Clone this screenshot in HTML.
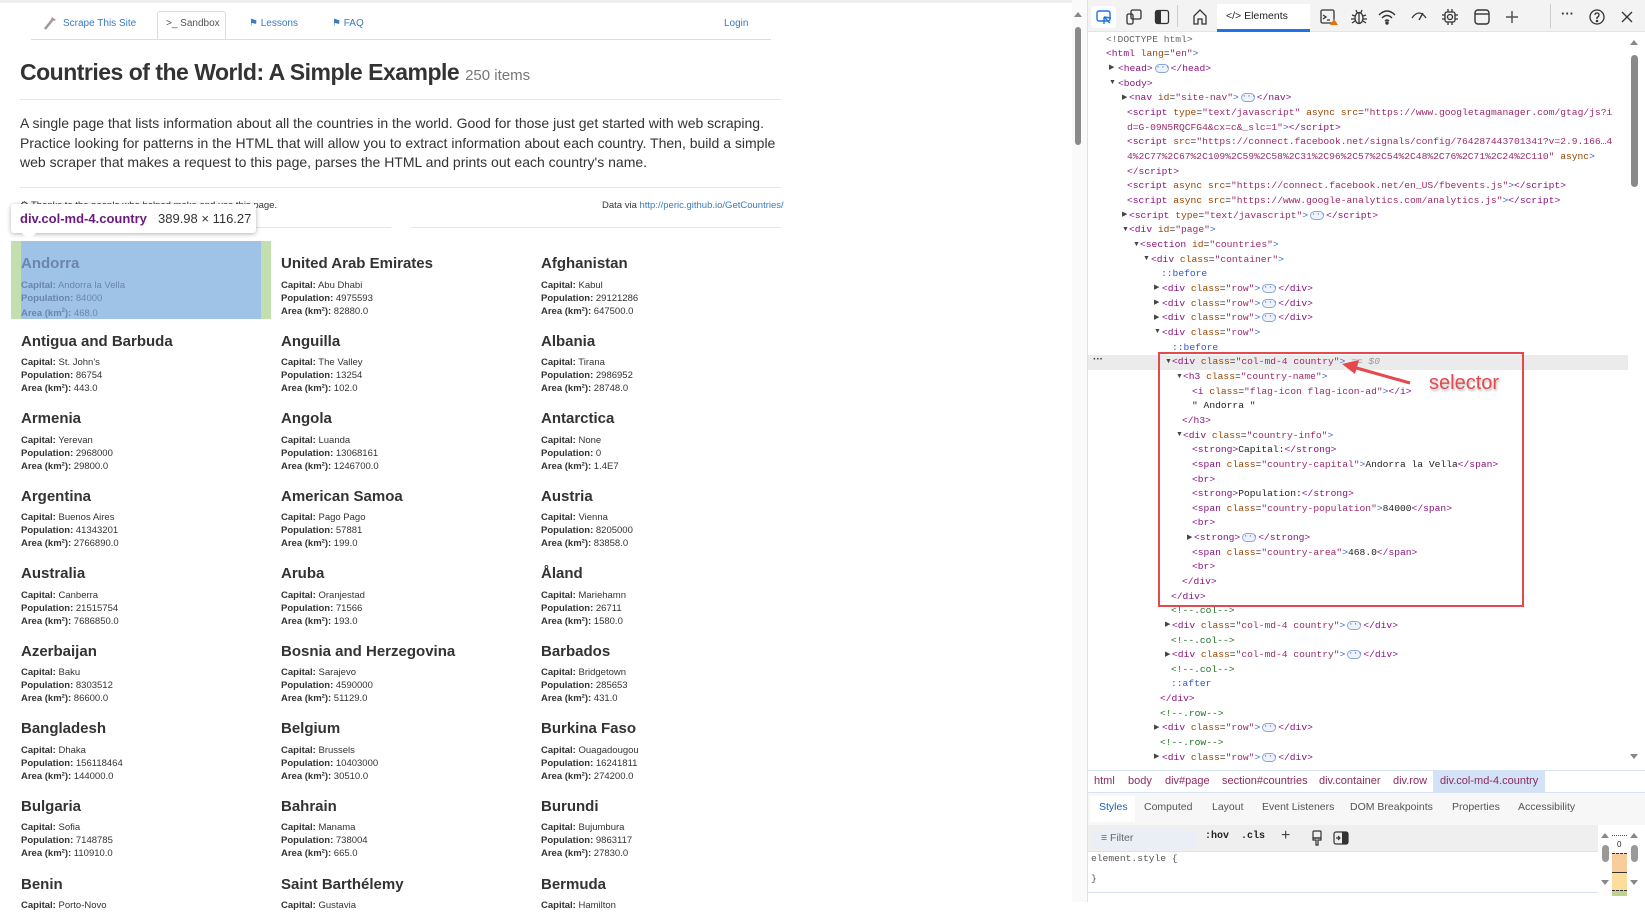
<!DOCTYPE html>
<html><head><meta charset="utf-8">
<style>
*{margin:0;padding:0;box-sizing:border-box}
body{width:1645px;height:902px;overflow:hidden;background:#fff;font-family:"Liberation Sans",Arial,sans-serif;position:relative}
.a{position:absolute;white-space:pre}
.nav{font-size:10px;color:#3a7bbf;top:18px}
.ct{font-size:15px;font-weight:bold;color:#333}
.ci{font-size:9.5px;color:#333;line-height:13px}
.ci b{font-weight:bold}
.dt{position:absolute;white-space:pre;font-family:"Liberation Mono",monospace;font-size:9.65px;line-height:14px;color:#222}
.t{color:#881280}.at{color:#994500}.v{color:#9b2a6a}.p{color:#3a5fcd}.c{color:#236e25}.ps{color:#3355cc}
.tri{position:absolute;font-size:7px;color:#444;line-height:14px}
.el{display:inline-block;width:14px;height:9px;border:1px solid #8aa7d9;border-radius:5px;background:#eef3fb;color:#3a5fcd;font-size:8px;line-height:6px;text-align:center;vertical-align:middle;margin:0 2px}
.ui{position:absolute;white-space:pre;font-size:10.5px;color:#555}
.bc{position:absolute;white-space:pre;font-size:11px;color:#8a2b5f;top:775px}
.ic{position:absolute;top:8px}
</style></head><body>
<div class="a" style="left:0;top:0;width:1072px;height:3px;background:#eee"></div>

<svg class="a" style="left:42px;top:15px" width="16" height="16" viewBox="0 0 16 16"><path d="M3 14 L11 4" stroke="#999" stroke-width="2.5"/><path d="M10 2 L14 5 L12 6 L9 4Z" fill="#c88"/></svg>
<div class="a nav" style="left:63px">Scrape This Site</div>
<div class="a" style="left:157px;top:11px;width:69px;height:29px;border:1px solid #ddd;border-bottom:none;border-radius:3px 3px 0 0;background:#fff"></div>
<div class="a nav" style="left:166px;color:#555">&gt;_ Sandbox</div>
<div class="a nav" style="left:249px">&#9873; Lessons</div>
<div class="a nav" style="left:332px">&#9873; FAQ</div>
<div class="a nav" style="left:724px">Login</div>
<div class="a" style="left:31px;top:39px;width:740px;height:1px;background:#ddd"></div>

<div class="a" style="left:20px;top:59px;font-size:23px;font-weight:bold;letter-spacing:-0.5px;color:#333">Countries of the World: A Simple Example <span style="font-size:15px;font-weight:normal;letter-spacing:0;color:#777">250 items</span></div>
<div class="a" style="left:20px;top:99px;width:761px;height:1px;background:#e6e6e6"></div>
<div class="a" style="left:20px;top:114px;font-size:14px;line-height:19.5px;color:#333">A single page that lists information about all the countries in the world. Good for those just get started with web scraping.
Practice looking for patterns in the HTML that will allow you to extract information about each country. Then, build a simple
web scraper that makes a request to this page, parses the HTML and prints out each country's name.</div>
<div class="a" style="left:20px;top:187px;width:761px;height:1px;background:#e6e6e6"></div>
<div class="a" style="left:20px;top:200px;font-size:9.5px;color:#333">&#9881; Thanks to the people who helped make and use this page.</div>
<div class="a" style="left:602px;top:200px;font-size:9.5px;color:#333">Data via <span style="color:#3a7bbf">http://peric.github.io/GetCountries/</span></div>
<div class="a" style="left:20px;top:227px;width:371px;height:1px;background:#e6e6e6"></div>
<div class="a" style="left:411px;top:227px;width:370px;height:1px;background:#e6e6e6"></div>

<div class="a" style="left:11px;top:241px;width:260px;height:78px;background:#c3dfb0"></div>
<div class="a" style="left:21px;top:241px;width:240px;height:78px;background:#9fc3e7"></div>

<div class="a" style="left:11px;top:204px;width:245px;height:29px;background:#fff;border-radius:3px;box-shadow:0 1px 5px rgba(0,0,0,.3)"></div>
<div class="a" style="left:24px;top:228px;width:10px;height:10px;background:#fff;transform:rotate(45deg)"></div>
<div class="a" style="left:20px;top:211px;font-size:13px;font-weight:bold;color:#6a1b7f">div.col-md-4.country</div>
<div class="a" style="left:158px;top:211px;font-size:13px;color:#333">389.98 × 116.27</div>

<div class="a ct" style="left:21px;top:255px;color:#6a86a8">Andorra</div>
<div class="a ci" style="left:21px;top:279px;color:#6a86a8"><b>Capital:</b> Andorra la Vella
<b>Population:</b> 84000
<b>Area (km<sup style="font-size:6px">2</sup>):</b> 468.0</div>

<div class="a ct" style="left:281px;top:255px">United Arab Emirates</div>
<div class="a ci" style="left:281px;top:279px"><b>Capital:</b> Abu Dhabi
<b>Population:</b> 4975593
<b>Area (km²):</b> 82880.0</div>
<div class="a ct" style="left:541px;top:255px">Afghanistan</div>
<div class="a ci" style="left:541px;top:279px"><b>Capital:</b> Kabul
<b>Population:</b> 29121286
<b>Area (km²):</b> 647500.0</div>

<div class="a ct" style="left:21px;top:333px">Antigua and Barbuda</div>
<div class="a ci" style="left:21px;top:356px"><b>Capital:</b> St. John's
<b>Population:</b> 86754
<b>Area (km²):</b> 443.0</div>
<div class="a ct" style="left:281px;top:333px">Anguilla</div>
<div class="a ci" style="left:281px;top:356px"><b>Capital:</b> The Valley
<b>Population:</b> 13254
<b>Area (km²):</b> 102.0</div>
<div class="a ct" style="left:541px;top:333px">Albania</div>
<div class="a ci" style="left:541px;top:356px"><b>Capital:</b> Tirana
<b>Population:</b> 2986952
<b>Area (km²):</b> 28748.0</div>

<div class="a ct" style="left:21px;top:410px">Armenia</div>
<div class="a ci" style="left:21px;top:434px"><b>Capital:</b> Yerevan
<b>Population:</b> 2968000
<b>Area (km²):</b> 29800.0</div>
<div class="a ct" style="left:281px;top:410px">Angola</div>
<div class="a ci" style="left:281px;top:434px"><b>Capital:</b> Luanda
<b>Population:</b> 13068161
<b>Area (km²):</b> 1246700.0</div>
<div class="a ct" style="left:541px;top:410px">Antarctica</div>
<div class="a ci" style="left:541px;top:434px"><b>Capital:</b> None
<b>Population:</b> 0
<b>Area (km²):</b> 1.4E7</div>

<div class="a ct" style="left:21px;top:488px">Argentina</div>
<div class="a ci" style="left:21px;top:511px"><b>Capital:</b> Buenos Aires
<b>Population:</b> 41343201
<b>Area (km²):</b> 2766890.0</div>
<div class="a ct" style="left:281px;top:488px">American Samoa</div>
<div class="a ci" style="left:281px;top:511px"><b>Capital:</b> Pago Pago
<b>Population:</b> 57881
<b>Area (km²):</b> 199.0</div>
<div class="a ct" style="left:541px;top:488px">Austria</div>
<div class="a ci" style="left:541px;top:511px"><b>Capital:</b> Vienna
<b>Population:</b> 8205000
<b>Area (km²):</b> 83858.0</div>

<div class="a ct" style="left:21px;top:565px">Australia</div>
<div class="a ci" style="left:21px;top:589px"><b>Capital:</b> Canberra
<b>Population:</b> 21515754
<b>Area (km²):</b> 7686850.0</div>
<div class="a ct" style="left:281px;top:565px">Aruba</div>
<div class="a ci" style="left:281px;top:589px"><b>Capital:</b> Oranjestad
<b>Population:</b> 71566
<b>Area (km²):</b> 193.0</div>
<div class="a ct" style="left:541px;top:565px">Åland</div>
<div class="a ci" style="left:541px;top:589px"><b>Capital:</b> Mariehamn
<b>Population:</b> 26711
<b>Area (km²):</b> 1580.0</div>

<div class="a ct" style="left:21px;top:643px">Azerbaijan</div>
<div class="a ci" style="left:21px;top:666px"><b>Capital:</b> Baku
<b>Population:</b> 8303512
<b>Area (km²):</b> 86600.0</div>
<div class="a ct" style="left:281px;top:643px">Bosnia and Herzegovina</div>
<div class="a ci" style="left:281px;top:666px"><b>Capital:</b> Sarajevo
<b>Population:</b> 4590000
<b>Area (km²):</b> 51129.0</div>
<div class="a ct" style="left:541px;top:643px">Barbados</div>
<div class="a ci" style="left:541px;top:666px"><b>Capital:</b> Bridgetown
<b>Population:</b> 285653
<b>Area (km²):</b> 431.0</div>

<div class="a ct" style="left:21px;top:720px">Bangladesh</div>
<div class="a ci" style="left:21px;top:744px"><b>Capital:</b> Dhaka
<b>Population:</b> 156118464
<b>Area (km²):</b> 144000.0</div>
<div class="a ct" style="left:281px;top:720px">Belgium</div>
<div class="a ci" style="left:281px;top:744px"><b>Capital:</b> Brussels
<b>Population:</b> 10403000
<b>Area (km²):</b> 30510.0</div>
<div class="a ct" style="left:541px;top:720px">Burkina Faso</div>
<div class="a ci" style="left:541px;top:744px"><b>Capital:</b> Ouagadougou
<b>Population:</b> 16241811
<b>Area (km²):</b> 274200.0</div>

<div class="a ct" style="left:21px;top:798px">Bulgaria</div>
<div class="a ci" style="left:21px;top:821px"><b>Capital:</b> Sofia
<b>Population:</b> 7148785
<b>Area (km²):</b> 110910.0</div>
<div class="a ct" style="left:281px;top:798px">Bahrain</div>
<div class="a ci" style="left:281px;top:821px"><b>Capital:</b> Manama
<b>Population:</b> 738004
<b>Area (km²):</b> 665.0</div>
<div class="a ct" style="left:541px;top:798px">Burundi</div>
<div class="a ci" style="left:541px;top:821px"><b>Capital:</b> Bujumbura
<b>Population:</b> 9863117
<b>Area (km²):</b> 27830.0</div>

<div class="a ct" style="left:21px;top:876px">Benin</div>
<div class="a ci" style="left:21px;top:899px"><b>Capital:</b> Porto-Novo</div>
<div class="a ct" style="left:281px;top:876px">Saint Barthélemy</div>
<div class="a ci" style="left:281px;top:899px"><b>Capital:</b> Gustavia</div>
<div class="a ct" style="left:541px;top:876px">Bermuda</div>
<div class="a ci" style="left:541px;top:899px"><b>Capital:</b> Hamilton</div>

<div class="a" style="left:1072px;top:0;width:15px;height:902px;background:#fafafa"></div>
<div class="a" style="left:1074px;top:12px;width:0;height:0;border-left:4px solid transparent;border-right:4px solid transparent;border-bottom:5px solid #888"></div>
<div class="a" style="left:1075px;top:27px;width:6px;height:118px;background:#8a8a8a;border-radius:3px"></div>

<div class="a" style="left:1087px;top:0;width:558px;height:902px;background:#fff;border-left:1px solid #e0e0e0"></div>
<div class="a" style="left:1088px;top:0;width:557px;height:32px;background:#f3f3f3;border-bottom:1px solid #e4e4e4"></div>
<div class="a" style="left:1091px;top:6px;width:25px;height:22px;background:#fff;border-radius:3px"></div>
<svg class="ic" style="left:1095px" width="18" height="18" viewBox="0 0 18 18" fill="none" stroke="#1a73e8" stroke-width="1.4"><rect x="2" y="3" width="13" height="10" rx="2"/><path d="M9 9 L15 15 M9 9 L9 16 M9 9 L16 10"/></svg>
<svg class="ic" style="left:1125px" width="18" height="18" viewBox="0 0 18 18" fill="none" stroke="#333" stroke-width="1.3"><rect x="6" y="2" width="10" height="9" rx="1.5"/><rect x="2" y="6" width="6" height="10" rx="1.5"/></svg>
<svg class="ic" style="left:1153px" width="18" height="18" viewBox="0 0 18 18"><rect x="2.5" y="2.5" width="13" height="13" rx="2" fill="none" stroke="#333" stroke-width="1.3"/><rect x="3" y="3" width="5" height="12" fill="#333"/></svg>
<div class="a" style="left:1177px;top:5px;width:1px;height:22px;background:#ccc"></div>
<svg class="ic" style="left:1191px" width="18" height="18" viewBox="0 0 18 18" fill="none" stroke="#333" stroke-width="1.3"><path d="M3 16 V8 L9 2 L15 8 V16 H11 V11 H7 V16 Z"/></svg>
<div class="a" style="left:1217px;top:4px;width:93px;height:28px;background:#fff"></div>
<div class="a" style="left:1217px;top:29px;width:93px;height:3px;background:#1a73e8"></div>
<div class="a" style="left:1226px;top:10px;font-size:10.5px;color:#222">&lt;/&gt; Elements</div>
<svg class="ic" style="left:1319px" width="20" height="18" viewBox="0 0 20 18" fill="none" stroke="#333" stroke-width="1.3"><rect x="2" y="2" width="13" height="13" rx="1.5"/><path d="M4 7 L7 9 L4 11 M8 12 H11"/><path d="M15 11 L19 17 H11 Z" fill="#e8710a" stroke="none"/></svg>
<svg class="ic" style="left:1350px" width="18" height="18" viewBox="0 0 18 18" fill="none" stroke="#333" stroke-width="1.3"><ellipse cx="9" cy="10" rx="4" ry="5.5"/><path d="M9 5 V16 M2 7 L5 8 M16 7 L13 8 M1 11 H5 M17 11 H13 M2 15 L5 13 M16 15 L13 13 M6 2 L7 4.5 M12 2 L11 4.5"/></svg>
<svg class="ic" style="left:1378px" width="18" height="18" viewBox="0 0 18 18" fill="none" stroke="#333" stroke-width="1.4"><path d="M1 7 Q9 -1 17 7 M4 10 Q9 5 14 10 M7 13 Q9 11 11 13"/><circle cx="9" cy="15" r="1" fill="#333"/></svg>
<svg class="ic" style="left:1410px" width="18" height="18" viewBox="0 0 18 18" fill="none" stroke="#333" stroke-width="1.3"><path d="M2 10 Q9 0 16 10 M9 12 L13 5"/></svg>
<svg class="ic" style="left:1441px" width="18" height="18" viewBox="0 0 18 18" fill="none" stroke="#333" stroke-width="1.3"><rect x="4" y="4" width="10" height="10" rx="2"/><circle cx="9" cy="9" r="2.5"/><path d="M7 1 V4 M11 1 V4 M7 14 V17 M11 14 V17 M1 7 H4 M1 11 H4 M14 7 H17 M14 11 H17"/></svg>
<svg class="ic" style="left:1473px" width="18" height="18" viewBox="0 0 18 18" fill="none" stroke="#333" stroke-width="1.4"><rect x="2" y="2" width="14" height="14" rx="3"/><path d="M2 6 H16"/></svg>
<svg class="ic" style="left:1503px" width="18" height="18" viewBox="0 0 18 18" stroke="#555" stroke-width="1.5"><path d="M9 3 V15 M3 9 H15"/></svg>
<div class="a" style="left:1550px;top:4px;width:1px;height:24px;background:#ccc"></div>
<div class="a" style="left:1561px;top:6px;font-size:13px;color:#333;font-weight:bold">···</div>
<svg class="ic" style="left:1588px" width="18" height="18" viewBox="0 0 18 18" fill="none" stroke="#333" stroke-width="1.3"><circle cx="9" cy="9" r="7"/><path d="M7 7 Q7 5 9 5 Q11 5 11 7 Q11 8.5 9 9.5 V11"/><circle cx="9" cy="13" r=".6" fill="#333"/></svg>
<svg class="ic" style="left:1618px" width="18" height="18" viewBox="0 0 18 18" stroke="#333" stroke-width="1.3"><path d="M4 4 L14 14 M14 4 L4 14"/></svg>

<div class="a" style="left:1630px;top:40px;width:0;height:0;border-left:4px solid transparent;border-right:4px solid transparent;border-bottom:5px solid #888"></div>
<div class="a" style="left:1631px;top:55px;width:7px;height:132px;background:#8a8a8a;border-radius:4px"></div>
<div class="a" style="left:1630px;top:754px;width:0;height:0;border-left:4px solid transparent;border-right:4px solid transparent;border-top:5px solid #888"></div>

<div class="a" style="left:1088px;top:355px;width:540px;height:15px;background:#ebebeb"></div>
<div class="a" style="left:1093px;top:354px;font-size:10px;color:#333;font-weight:bold">···</div>

<div class="dt" style="left:1106px;top:33px;color:#666">&lt;!DOCTYPE html&gt;</div>
<div class="dt" style="left:1106px;top:47px"><span class="t">&lt;html</span> <span class="at">lang</span>=<span class="v">"en"</span><span class="p">&gt;</span></div>
<div class="tri" style="left:1109px;top:61px">▶</div><div class="dt" style="left:1118px;top:62px"><span class="t">&lt;head&gt;</span><span class="el">···</span><span class="t">&lt;/head&gt;</span></div>
<div class="tri" style="left:1109px;top:76px">▼</div><div class="dt" style="left:1118px;top:77px"><span class="t">&lt;body&gt;</span></div>
<div class="tri" style="left:1122px;top:91px">▶</div><div class="dt" style="left:1129px;top:91px"><span class="t">&lt;nav</span> <span class="at">id</span>=<span class="v">"site-nav"</span><span class="p">&gt;</span><span class="el">···</span><span class="t">&lt;/nav&gt;</span></div>
<div class="dt" style="left:1127px;top:106px"><span class="t">&lt;script</span> <span class="at">type</span>=<span class="v">"text/javascript"</span> <span class="at">async</span> <span class="at">src</span>=<span class="v">"https://www.googletagmanager.com/gtag/js?i</span></div>
<div class="dt" style="left:1127px;top:121px"><span class="v">d=G-09N5RQCFG4&amp;cx=c&amp;_slc=1"</span><span class="p">&gt;</span><span class="t">&lt;/script&gt;</span></div>
<div class="dt" style="left:1127px;top:135px"><span class="t">&lt;script</span> <span class="at">src</span>=<span class="v">"https://connect.facebook.net/signals/config/764287443701341?v=2.9.166…4</span></div>
<div class="dt" style="left:1127px;top:150px"><span class="v">4%2C77%2C67%2C109%2C59%2C58%2C31%2C96%2C57%2C54%2C48%2C76%2C71%2C24%2C110"</span> <span class="at">async</span><span class="p">&gt;</span></div>
<div class="dt" style="left:1127px;top:165px"><span class="t">&lt;/script&gt;</span></div>
<div class="dt" style="left:1127px;top:179px"><span class="t">&lt;script</span> <span class="at">async</span> <span class="at">src</span>=<span class="v">"https://connect.facebook.net/en_US/fbevents.js"</span><span class="p">&gt;</span><span class="t">&lt;/script&gt;</span></div>
<div class="dt" style="left:1127px;top:194px"><span class="t">&lt;script</span> <span class="at">async</span> <span class="at">src</span>=<span class="v">"https://www.google-analytics.com/analytics.js"</span><span class="p">&gt;</span><span class="t">&lt;/script&gt;</span></div>
<div class="tri" style="left:1122px;top:208px">▶</div><div class="dt" style="left:1129px;top:209px"><span class="t">&lt;script</span> <span class="at">type</span>=<span class="v">"text/javascript"</span><span class="p">&gt;</span><span class="el">···</span><span class="t">&lt;/script&gt;</span></div>
<div class="tri" style="left:1122px;top:223px">▼</div><div class="dt" style="left:1129px;top:223px"><span class="t">&lt;div</span> <span class="at">id</span>=<span class="v">"page"</span><span class="p">&gt;</span></div>
<div class="tri" style="left:1133px;top:238px">▼</div><div class="dt" style="left:1140px;top:238px"><span class="t">&lt;section</span> <span class="at">id</span>=<span class="v">"countries"</span><span class="p">&gt;</span></div>
<div class="tri" style="left:1143px;top:252px">▼</div><div class="dt" style="left:1151px;top:253px"><span class="t">&lt;div</span> <span class="at">class</span>=<span class="v">"container"</span><span class="p">&gt;</span></div>
<div class="dt ps" style="left:1161px;top:267px">::before</div>
<div class="tri" style="left:1154px;top:281px">▶</div><div class="dt" style="left:1162px;top:282px"><span class="t">&lt;div</span> <span class="at">class</span>=<span class="v">"row"</span><span class="p">&gt;</span><span class="el">···</span><span class="t">&lt;/div&gt;</span></div>
<div class="tri" style="left:1154px;top:296px">▶</div><div class="dt" style="left:1162px;top:297px"><span class="t">&lt;div</span> <span class="at">class</span>=<span class="v">"row"</span><span class="p">&gt;</span><span class="el">···</span><span class="t">&lt;/div&gt;</span></div>
<div class="tri" style="left:1154px;top:311px">▶</div><div class="dt" style="left:1162px;top:311px"><span class="t">&lt;div</span> <span class="at">class</span>=<span class="v">"row"</span><span class="p">&gt;</span><span class="el">···</span><span class="t">&lt;/div&gt;</span></div>
<div class="tri" style="left:1154px;top:325px">▼</div><div class="dt" style="left:1162px;top:326px"><span class="t">&lt;div</span> <span class="at">class</span>=<span class="v">"row"</span><span class="p">&gt;</span></div>
<div class="dt ps" style="left:1172px;top:341px">::before</div>
<div class="tri" style="left:1165px;top:355px">▼</div><div class="dt" style="left:1172px;top:355px"><span class="t">&lt;div</span> <span class="at">class</span>=<span class="v">"col-md-4 country"</span><span class="p">&gt;</span> <span style="color:#999;font-style:italic">== $0</span></div>
<div class="tri" style="left:1176px;top:370px">▼</div><div class="dt" style="left:1183px;top:370px"><span class="t">&lt;h3</span> <span class="at">class</span>=<span class="v">"country-name"</span><span class="p">&gt;</span></div>
<div class="dt" style="left:1192px;top:385px"><span class="t">&lt;i</span> <span class="at">class</span>=<span class="v">"flag-icon flag-icon-ad"</span><span class="p">&gt;</span><span class="t">&lt;/i&gt;</span></div>
<div class="dt" style="left:1192px;top:399px">" Andorra "</div>
<div class="dt" style="left:1182px;top:414px"><span class="t">&lt;/h3&gt;</span></div>
<div class="tri" style="left:1176px;top:428px">▼</div><div class="dt" style="left:1183px;top:429px"><span class="t">&lt;div</span> <span class="at">class</span>=<span class="v">"country-info"</span><span class="p">&gt;</span></div>
<div class="dt" style="left:1192px;top:443px"><span class="t">&lt;strong&gt;</span>Capital:<span class="t">&lt;/strong&gt;</span></div>
<div class="dt" style="left:1192px;top:458px"><span class="t">&lt;span</span> <span class="at">class</span>=<span class="v">"country-capital"</span><span class="p">&gt;</span>Andorra la Vella<span class="t">&lt;/span&gt;</span></div>
<div class="dt" style="left:1192px;top:473px"><span class="t">&lt;br&gt;</span></div>
<div class="dt" style="left:1192px;top:487px"><span class="t">&lt;strong&gt;</span>Population:<span class="t">&lt;/strong&gt;</span></div>
<div class="dt" style="left:1192px;top:502px"><span class="t">&lt;span</span> <span class="at">class</span>=<span class="v">"country-population"</span><span class="p">&gt;</span>84000<span class="t">&lt;/span&gt;</span></div>
<div class="dt" style="left:1192px;top:516px"><span class="t">&lt;br&gt;</span></div>
<div class="tri" style="left:1187px;top:531px">▶</div><div class="dt" style="left:1194px;top:531px"><span class="t">&lt;strong&gt;</span><span class="el">···</span><span class="t">&lt;/strong&gt;</span></div>
<div class="dt" style="left:1192px;top:546px"><span class="t">&lt;span</span> <span class="at">class</span>=<span class="v">"country-area"</span><span class="p">&gt;</span>468.0<span class="t">&lt;/span&gt;</span></div>
<div class="dt" style="left:1192px;top:560px"><span class="t">&lt;br&gt;</span></div>
<div class="dt" style="left:1182px;top:575px"><span class="t">&lt;/div&gt;</span></div>
<div class="dt" style="left:1171px;top:590px"><span class="t">&lt;/div&gt;</span></div>
<div class="dt c" style="left:1171px;top:604px">&lt;!--.col--&gt;</div>
<div class="tri" style="left:1165px;top:618px">▶</div><div class="dt" style="left:1172px;top:619px"><span class="t">&lt;div</span> <span class="at">class</span>=<span class="v">"col-md-4 country"</span><span class="p">&gt;</span><span class="el">···</span><span class="t">&lt;/div&gt;</span></div>
<div class="dt c" style="left:1171px;top:634px">&lt;!--.col--&gt;</div>
<div class="tri" style="left:1165px;top:648px">▶</div><div class="dt" style="left:1172px;top:648px"><span class="t">&lt;div</span> <span class="at">class</span>=<span class="v">"col-md-4 country"</span><span class="p">&gt;</span><span class="el">···</span><span class="t">&lt;/div&gt;</span></div>
<div class="dt c" style="left:1171px;top:663px">&lt;!--.col--&gt;</div>
<div class="dt ps" style="left:1171px;top:677px">::after</div>
<div class="dt" style="left:1160px;top:692px"><span class="t">&lt;/div&gt;</span></div>
<div class="dt c" style="left:1160px;top:707px">&lt;!--.row--&gt;</div>
<div class="tri" style="left:1154px;top:721px">▶</div><div class="dt" style="left:1162px;top:721px"><span class="t">&lt;div</span> <span class="at">class</span>=<span class="v">"row"</span><span class="p">&gt;</span><span class="el">···</span><span class="t">&lt;/div&gt;</span></div>
<div class="dt c" style="left:1160px;top:736px">&lt;!--.row--&gt;</div>
<div class="tri" style="left:1154px;top:750px">▶</div><div class="dt" style="left:1162px;top:751px"><span class="t">&lt;div</span> <span class="at">class</span>=<span class="v">"row"</span><span class="p">&gt;</span><span class="el">···</span><span class="t">&lt;/div&gt;</span></div>

<div class="a" style="left:1158px;top:352px;width:366px;height:255px;border:2.5px solid #e5484d"></div>
<svg class="a" style="left:1335px;top:355px" width="90" height="40" viewBox="0 0 90 40"><path d="M75 28 L18 12" stroke="#e5484d" stroke-width="3"/><path d="M7 9 L24 5 L20 19 Z" fill="#e5484d"/></svg>
<div class="a" style="left:1429px;top:372px;font-size:20px;color:#e5484d;text-shadow:1px 2px 2px #bbb">selector</div>

<div class="a" style="left:1088px;top:770px;width:557px;height:23px;background:#fff;border-top:1px solid #d6e2f5;border-bottom:1px solid #d6e2f5"></div>
<div class="a" style="left:1433px;top:771px;width:112px;height:21px;background:#d3e2f7"></div>
<div class="bc" style="left:1094px">html</div>
<div class="bc" style="left:1128px">body</div>
<div class="bc" style="left:1165px">div#page</div>
<div class="bc" style="left:1222px">section#countries</div>
<div class="bc" style="left:1319px">div.container</div>
<div class="bc" style="left:1393px">div.row</div>
<div class="bc" style="left:1440px">div.col-md-4.country</div>
<div class="a" style="left:1088px;top:793px;width:557px;height:32px;background:#f7f7f7"></div>
<div class="a" style="left:1090px;top:796px;width:45px;height:26px;background:#fff"></div>
<div class="ui" style="left:1099px;top:801px;color:#1a5fb4">Styles</div>
<div class="ui" style="left:1144px;top:801px">Computed</div>
<div class="ui" style="left:1212px;top:801px">Layout</div>
<div class="ui" style="left:1262px;top:801px">Event Listeners</div>
<div class="ui" style="left:1350px;top:801px">DOM Breakpoints</div>
<div class="ui" style="left:1452px;top:801px">Properties</div>
<div class="ui" style="left:1518px;top:801px">Accessibility</div>
<div class="a" style="left:1088px;top:825px;width:520px;height:27px;background:#efefef;border-bottom:1px solid #d6e2f5"></div>
<div class="a" style="left:1092px;top:829px;width:106px;height:20px;background:#eaeef5;border-radius:10px"></div>
<div class="ui" style="left:1101px;top:832px;color:#666">&#8801; Filter</div>
<div class="ui" style="left:1205px;top:831px;font-family:'Liberation Mono',monospace;color:#222;font-weight:bold;font-size:10px">:hov  .cls</div>
<div class="ui" style="left:1281px;top:827px;font-size:16px;color:#444">+</div>
<svg class="a" style="left:1310px;top:830px" width="14" height="16" viewBox="0 0 14 16" fill="none" stroke="#333" stroke-width="1.2"><rect x="3" y="1" width="8" height="7" rx="1"/><path d="M3 8 H11 V10 H8 V15 H6 V10 H3Z"/></svg>
<svg class="a" style="left:1333px;top:831px" width="16" height="14" viewBox="0 0 16 14"><rect x="1" y="1" width="14" height="12" rx="2" fill="none" stroke="#333" stroke-width="1.2"/><rect x="9" y="1" width="6" height="12" fill="#333"/><path d="M3 7 H7 M5 5 L7 7 L5 9" stroke="#333" stroke-width="1.2" fill="none"/></svg>
<div class="dt" style="left:1091px;top:852px;color:#555">element.style {</div>
<div class="dt" style="left:1091px;top:872px;color:#555">}</div>
<div class="a" style="left:1088px;top:892px;width:520px;height:1px;background:#d6e2f5"></div>
<div class="a" style="left:1598px;top:825px;width:47px;height:77px;background:#fff"></div>
<div class="a" style="left:1601px;top:833px;width:0;height:0;border-left:4px solid transparent;border-right:4px solid transparent;border-bottom:5px solid #888"></div>
<div class="a" style="left:1602px;top:845px;width:7px;height:17px;background:#999;border-radius:4px"></div>
<div class="a" style="left:1601px;top:880px;width:0;height:0;border-left:4px solid transparent;border-right:4px solid transparent;border-top:5px solid #888"></div>
<div class="a" style="left:1612px;top:835px;width:15px;height:1px;border-top:1px dotted #555"></div>
<div class="a" style="left:1617px;top:840px;font-size:8px;color:#222">0</div>
<div class="a" style="left:1612px;top:853px;width:15px;height:19px;background:#f9cc9d;border-top:1px dashed #333"></div>
<div class="a" style="left:1612px;top:872px;width:15px;height:18px;background:#fddd9b;border-top:1px solid #333"></div>
<div class="a" style="left:1612px;top:890px;width:15px;height:6px;background:#c3d08b;border-top:1px dashed #333"></div>
<div class="a" style="left:1630px;top:833px;width:0;height:0;border-left:4px solid transparent;border-right:4px solid transparent;border-bottom:5px solid #888"></div>
<div class="a" style="left:1631px;top:845px;width:7px;height:17px;background:#999;border-radius:4px"></div>
<div class="a" style="left:1630px;top:880px;width:0;height:0;border-left:4px solid transparent;border-right:4px solid transparent;border-top:5px solid #888"></div>
</body></html>
